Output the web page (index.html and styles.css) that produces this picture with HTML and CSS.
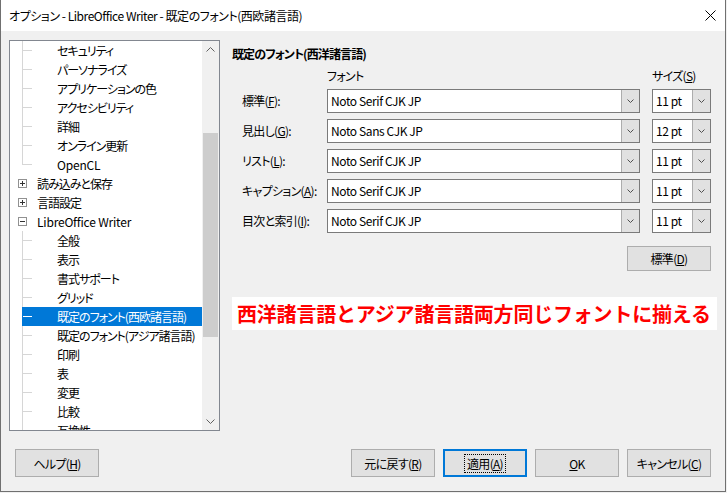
FILE: index.html
```html
<!DOCTYPE html>
<html lang="ja">
<head>
<meta charset="utf-8">
<title>オプション</title>
<link rel="stylesheet" href="styles.css">
</head>
<body>
<div class="window">
  <div class="titlebar">
    <span class="title">オプション - LibreOffice Writer - 既定のフォント(西欧諸言語)</span>
    <svg class="close" width="11" height="11" viewBox="0 0 11 11"><path d="M0.5 0.5 L10.5 10.5 M10.5 0.5 L0.5 10.5" stroke="#000" stroke-width="1" fill="none"/></svg>
  </div>
  <div class="content">
    <div class="tree">
      <div class="tree-list">
        <div class="row child">セキュリティ</div>
        <div class="row child">パーソナライズ</div>
        <div class="row child">アプリケーションの色</div>
        <div class="row child">アクセシビリティ</div>
        <div class="row child">詳細</div>
        <div class="row child">オンライン更新</div>
        <div class="row child last"><span class="latin">OpenCL</span></div>
        <div class="row top"><span class="exp plus"></span>読み込みと保存</div>
        <div class="row top"><span class="exp plus"></span>言語設定</div>
        <div class="row top"><span class="exp"></span><span class="latin">LibreOffice Writer</span></div>
        <div class="row child">全般</div>
        <div class="row child">表示</div>
        <div class="row child">書式サポート</div>
        <div class="row child">グリッド</div>
        <div class="row child sel">既定のフォント(西欧諸言語)</div>
        <div class="row child">既定のフォント(アジア諸言語)</div>
        <div class="row child">印刷</div>
        <div class="row child">表</div>
        <div class="row child">変更</div>
        <div class="row child">比較</div>
        <div class="row child">互換性</div>
      </div>
      <div class="scrollbar">
        <div class="sb-btn"><svg width="9" height="5" viewBox="0 0 9 5"><path d="M0.5 4.5 L4.5 0.5 L8.5 4.5" fill="none" stroke="#606060"/></svg></div>
        <div class="sb-track"><div class="sb-thumb"></div></div>
        <div class="sb-btn"><svg width="9" height="5" viewBox="0 0 9 5"><path d="M0.5 0.5 L4.5 4.5 L8.5 0.5" fill="none" stroke="#606060"/></svg></div>
      </div>
    </div>
    <div class="page">
      <div class="heading">既定のフォント(西洋諸言語)</div>
      <div class="font-grid">
        <div></div>
        <div class="col-label">フォント</div>
        <div class="col-label">サイズ(<u>S</u>)</div>

        <div class="flabel">標準(<u>F</u>):</div>
        <div class="combo"><span class="combo-text">Noto Serif CJK JP</span><span class="combo-btn"><svg width="7" height="4" viewBox="0 0 7 4"><path d="M0.5 0.5 L3.5 3.5 L6.5 0.5" fill="none" stroke="#505050"/></svg></span></div>
        <div class="combo"><span class="combo-text">11 pt</span><span class="combo-btn"><svg width="7" height="4" viewBox="0 0 7 4"><path d="M0.5 0.5 L3.5 3.5 L6.5 0.5" fill="none" stroke="#505050"/></svg></span></div>

        <div class="flabel">見出し(<u>G</u>):</div>
        <div class="combo"><span class="combo-text">Noto Sans CJK JP</span><span class="combo-btn"><svg width="7" height="4" viewBox="0 0 7 4"><path d="M0.5 0.5 L3.5 3.5 L6.5 0.5" fill="none" stroke="#505050"/></svg></span></div>
        <div class="combo"><span class="combo-text">12 pt</span><span class="combo-btn"><svg width="7" height="4" viewBox="0 0 7 4"><path d="M0.5 0.5 L3.5 3.5 L6.5 0.5" fill="none" stroke="#505050"/></svg></span></div>

        <div class="flabel">リスト(<u>L</u>):</div>
        <div class="combo"><span class="combo-text">Noto Serif CJK JP</span><span class="combo-btn"><svg width="7" height="4" viewBox="0 0 7 4"><path d="M0.5 0.5 L3.5 3.5 L6.5 0.5" fill="none" stroke="#505050"/></svg></span></div>
        <div class="combo"><span class="combo-text">11 pt</span><span class="combo-btn"><svg width="7" height="4" viewBox="0 0 7 4"><path d="M0.5 0.5 L3.5 3.5 L6.5 0.5" fill="none" stroke="#505050"/></svg></span></div>

        <div class="flabel">キャプション(<u>A</u>):</div>
        <div class="combo"><span class="combo-text">Noto Serif CJK JP</span><span class="combo-btn"><svg width="7" height="4" viewBox="0 0 7 4"><path d="M0.5 0.5 L3.5 3.5 L6.5 0.5" fill="none" stroke="#505050"/></svg></span></div>
        <div class="combo"><span class="combo-text">11 pt</span><span class="combo-btn"><svg width="7" height="4" viewBox="0 0 7 4"><path d="M0.5 0.5 L3.5 3.5 L6.5 0.5" fill="none" stroke="#505050"/></svg></span></div>

        <div class="flabel">目次と索引(<u>I</u>):</div>
        <div class="combo"><span class="combo-text">Noto Serif CJK JP</span><span class="combo-btn"><svg width="7" height="4" viewBox="0 0 7 4"><path d="M0.5 0.5 L3.5 3.5 L6.5 0.5" fill="none" stroke="#505050"/></svg></span></div>
        <div class="combo"><span class="combo-text">11 pt</span><span class="combo-btn"><svg width="7" height="4" viewBox="0 0 7 4"><path d="M0.5 0.5 L3.5 3.5 L6.5 0.5" fill="none" stroke="#505050"/></svg></span></div>
      </div>
      <div class="default-row"><button class="btn std">標準(<u>D</u>)</button></div>
      <div class="note">西洋諸言語とアジア諸言語両方同じフォントに揃える</div>
    </div>
  </div>
  <div class="footer">
    <button class="btn help">ヘルプ(<u>H</u>)</button>
    <button class="btn">元に戻す(<u>R</u>)</button>
    <button class="btn default"><span class="focus">適用(<u>A</u>)</span></button>
    <button class="btn"><u>O</u>K</button>
    <button class="btn">キャンセル(<u>C</u>)</button>
  </div>
</div>
</body>
</html>
```

FILE: styles.css
```css
* { box-sizing: border-box; }
html, body { margin: 0; padding: 0; }
body {
  width: 727px;
  height: 493px;
  background: #f0f0f0;
  font-family: "Noto Sans CJK JP", "Noto Sans", sans-serif;
  font-size: 12px;
  color: #000;
  font-feature-settings: "palt";
  letter-spacing: -0.7px;
  overflow: hidden;
}
.window {
  width: 726px;
  height: 492px;
  border: 1px solid #707070;
  border-top: none;
  background: #f0f0f0;
  display: flex;
  flex-direction: column;
}
.titlebar {
  height: 31px;
  flex: none;
  background: #fff;
  display: flex;
  align-items: center;
  justify-content: space-between;
  padding: 0 9px 0 8px;
}
.title { font-size: 12px; line-height: 16px; letter-spacing: -0.45px; }
.close { display: block; }

.content {
  display: flex;
  padding: 9px 0 0 8px;
  height: 400px;
  flex: none;
}
.tree {
  width: 211px;
  height: 391px;
  border: 1px solid #828790;
  background: #fff;
  display: flex;
}
.tree-list {
  width: 192px;
  overflow: hidden;
}
.row {
  position: relative;
  height: 19px;
  line-height: 19px;
  white-space: nowrap;
  letter-spacing: -1px;
}
.latin { letter-spacing: -0.2px; }
.row.child { padding-left: 47px; }
.row.top { padding-left: 27px; }
.row.child::before {
  content: "";
  position: absolute;
  left: 12px;
  top: 9px;
  width: 10px;
  height: 1px;
  background: #d6d6d6;
}
.row.child::after {
  content: "";
  position: absolute;
  left: 12px;
  top: 0;
  width: 1px;
  height: 19px;
  background: #d6d6d6;
}
.row.child.last::after { height: 10px; }
.row.sel {
  background: linear-gradient(to right, transparent 12px, #0078d7 12px);
  color: #fff;
}
.row.sel::before { background: #fff; }
.row.sel::after { background: #0078d7; }
.exp {
  position: absolute;
  left: 8px;
  top: 5px;
  width: 9px;
  height: 9px;
  border: 1px solid #919191;
  background: #fff;
}
.exp::before {
  content: "";
  position: absolute;
  left: 1px;
  top: 3px;
  width: 5px;
  height: 1px;
  background: #333;
}
.exp.plus::after {
  content: "";
  position: absolute;
  left: 3px;
  top: 1px;
  width: 1px;
  height: 5px;
  background: #333;
}
.scrollbar {
  width: 17px;
  background: #f0f0f0;
  display: flex;
  flex-direction: column;
}
.sb-btn {
  height: 17px;
  display: flex;
  align-items: center;
  justify-content: center;
}
.sb-track { flex: 1; padding: 75px 1px 0 1px; }
.sb-thumb { height: 204px; background: #cdcdcd; }

.page {
  margin-left: 12px;
  width: 485px;
  padding-top: 6px;
}
.heading {
  font-weight: bold;
  line-height: 16px;
  height: 16px;
  letter-spacing: -0.9px;
}
.font-grid {
  margin-top: 6px;
  display: grid;
  grid-template-columns: 83px 313px 59px;
  grid-template-rows: 15px repeat(5, 24px);
  column-gap: 12px;
  row-gap: 6px;
}
.col-label { line-height: 15px; }
.flabel {
  padding-left: 10px;
  line-height: 24px;
  white-space: nowrap;
}
.combo {
  display: flex;
  border: 1px solid #7a7a7a;
  background: #fff;
}
.combo-text {
  flex: 1;
  padding-left: 3px;
  line-height: 22px;
  white-space: nowrap;
  overflow: hidden;
  letter-spacing: -0.4px;
}
.combo-btn {
  width: 18px;
  background: #e1e1e1;
  border-left: 1px solid #adadad;
  display: flex;
  align-items: center;
  justify-content: center;
}
.default-row {
  margin-top: 13px;
  width: 479px;
  display: flex;
  justify-content: flex-end;
}
.btn {
  width: 84px;
  height: 28px;
  border: 1px solid #adadad;
  background: #e1e1e1;
  font-family: inherit;
  font-size: 12px;
  font-feature-settings: "palt";
  letter-spacing: -0.7px;
  color: #000;
  padding: 0;
  display: flex;
  align-items: center;
  justify-content: center;
}
.btn.std { height: 25px; }
.btn.default { border: 2px solid #0078d7; }
.focus {
  outline: 1px dotted #000;
  padding: 0 2px;
  line-height: 17px;
}
.note {
  margin-top: 26px;
  height: 33px;
  background: #fff;
  color: #ff0000;
  font-weight: bold;
  font-size: 20px;
  line-height: 33px;
  padding-left: 5px;
  font-feature-settings: normal;
  letter-spacing: -0.2px;
  white-space: nowrap;
}
.footer {
  display: flex;
  gap: 8px;
  padding: 18px 14px 0 14px;
}
.footer .help { margin-right: auto; }
```
